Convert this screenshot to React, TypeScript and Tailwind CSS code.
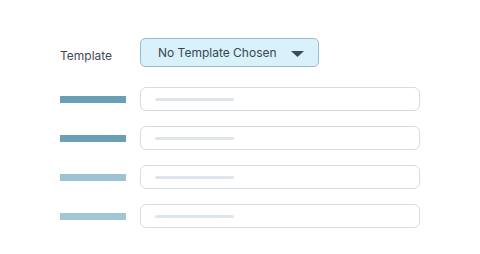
import React from "react";

function Row({ bar }: { bar: string }) {
  return (
    <div className="flex items-center h-[24px]">
      <div className="w-[80px] flex items-center">
        <div className={`w-[66px] h-[7px] ${bar}`} />
      </div>
      <div className="w-[280px] h-[24px] rounded-[6px] border border-[#d3dde4] bg-white flex items-center pl-[14px]">
        <div className="w-[79px] h-[3px] rounded-full bg-[#dfe6eb]" />
      </div>
    </div>
  );
}

export default function App() {
  return (
    <div className="w-[480px] h-[254px] bg-white pl-[60px] pt-[38px]" style={{ fontFamily: "Inter, 'Noto Sans', sans-serif" }}>
      <div className="flex items-center h-[29px]">
        <div className="w-[80px] text-[12px] text-[#3f4a53] pt-[6px]">Template</div>
        <div className="w-[179px] h-[29px] rounded-[5px] border border-[#9dbccb] bg-[#d8f1fb] flex items-center pl-[17px] pr-[14px] justify-between">
          <span className="text-[12px] text-[#3a4650] pt-[1px]">No Template Chosen</span>
          <svg width="13" height="6" viewBox="0 0 13 6" className="mt-[2px]">
            <path d="M0 0 L13 0 L6.5 6 Z" fill="#3c4b56" />
          </svg>
        </div>
      </div>
      <div className="flex flex-col gap-[15px] mt-[20px]">
        <Row bar="bg-[#6b9fb6]" />
        <Row bar="bg-[#6b9fb6]" />
        <Row bar="bg-[#9dc2d1]" />
        <Row bar="bg-[#a3c6d4]" />
      </div>
    </div>
  );
}
